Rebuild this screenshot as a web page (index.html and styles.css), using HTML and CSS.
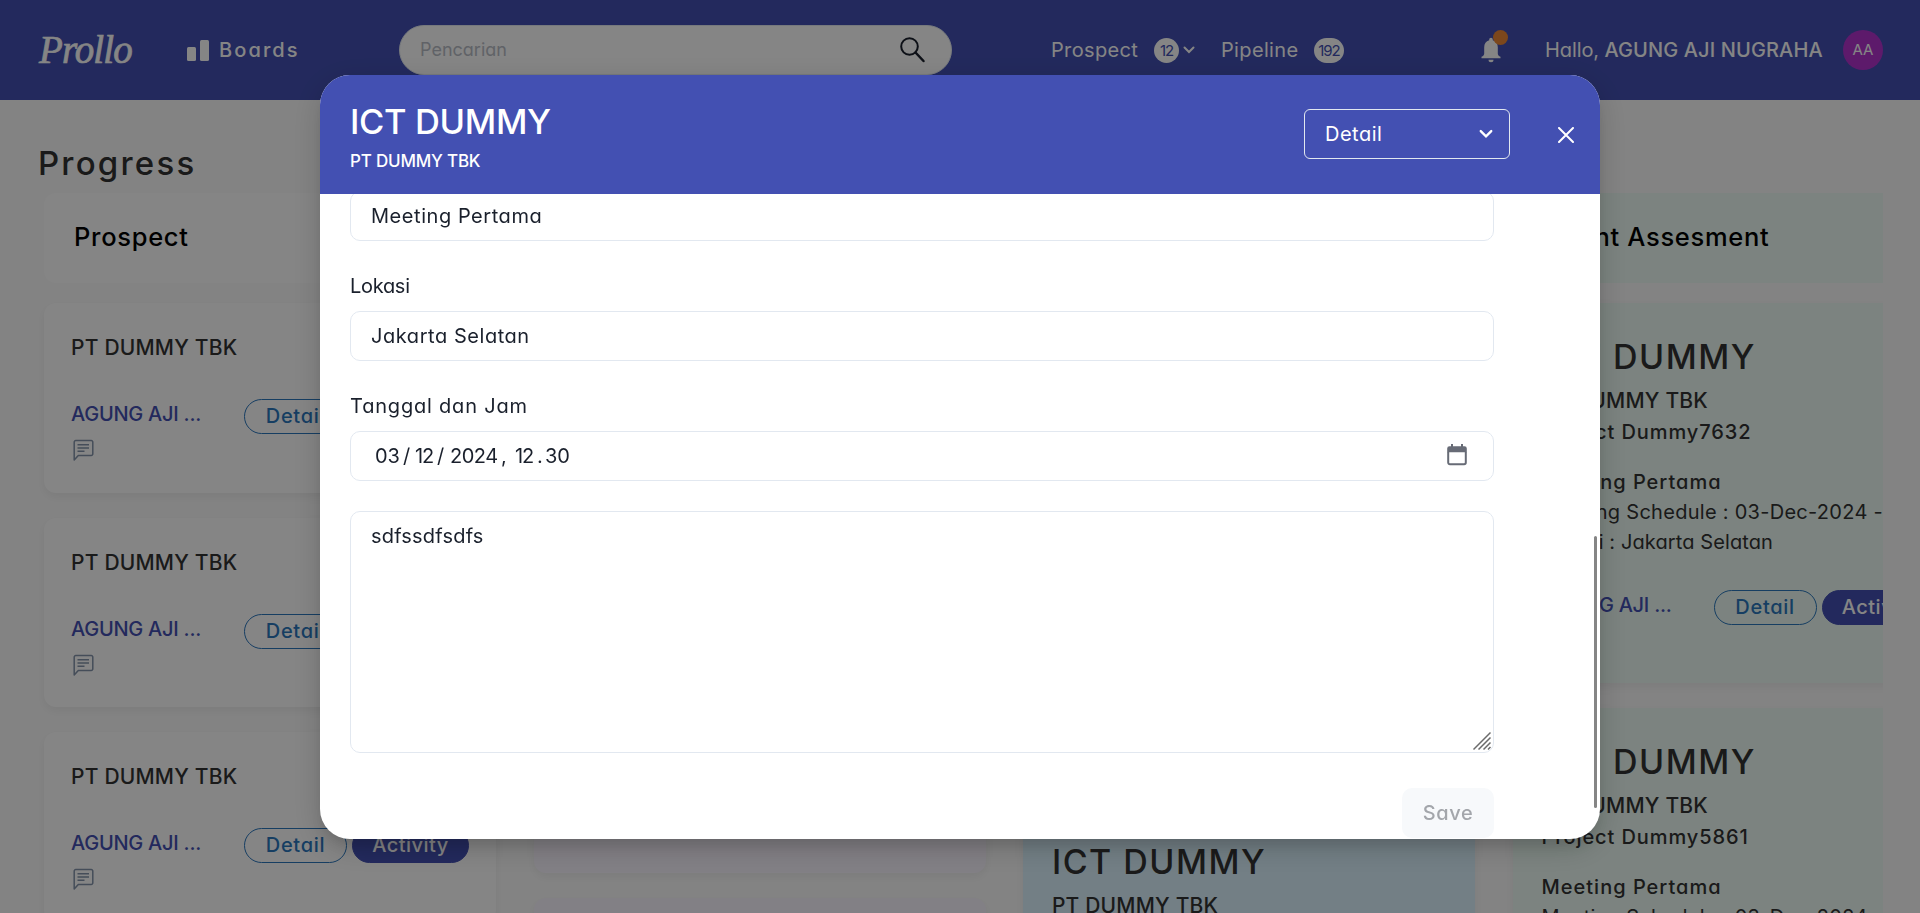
FILE: index.html
```html
<!DOCTYPE html>
<html lang="id">
<head>
<meta charset="utf-8">
<title>Prollo</title>
<link rel="stylesheet" href="styles.css">
</head>
<body>
<svg class="defs" width="0" height="0">
  <symbol id="comment" viewBox="0 0 24 24"><path d="M3.2 21V3.2A1.6 1.6 0 0 1 4.800 1.600H20.200A1.600 1.600 0 0 1 21.800 3.200V14.800A1.600 1.600 0 0 1 20.200 16.400H7.300Z" fill="none" stroke="currentColor" stroke-width="1.5" stroke-linejoin="round"/><path d="M6.500 5.700H18M6.500 9H18M6.500 12.300H13.500" stroke="currentColor" stroke-width="1.400"/></symbol>
  <symbol id="chevron" viewBox="0 0 12 8"><path d="M1.500 1.500 6 6l4.500-4.500" fill="none" stroke="currentColor" stroke-width="2" stroke-linecap="round"/></symbol>
</svg>
<header class="topbar">
  <div class="logo">Prollo</div>
  <div class="boards">
    <svg width="22" height="21" viewBox="0 0 22 21"><rect x="0" y="7" width="9" height="14" rx="1.500" fill="#fff"/><rect x="13" y="0" width="9" height="21" rx="1.500" fill="#fff"/></svg>
    <span>Boards</span>
  </div>
  <div class="search">
    <span>Pencarian</span>
    <svg width="28" height="28" viewBox="0 0 28 28" fill="none" stroke="#1a202c"><circle cx="11.500" cy="10.500" r="8.300" stroke-width="2"/><path d="M17.500 16.500 25.500 25" stroke-width="2.500" stroke-linecap="round"/></svg>
  </div>
  <span class="stat stat-prospect">Prospect</span>
  <span class="count">12</span>
  <svg class="stat-chevron" width="12" height="8"><use href="#chevron"/></svg>
  <span class="stat stat-pipeline">Pipeline</span>
  <span class="count count-wide">192</span>
  <div class="bell">
    <svg width="22" height="26" viewBox="0 0 22 26" fill="#fff"><path d="M11 0.800c1.100 0 1.800.8 1.800 1.900v.5c3.200.9 5 3.500 5 7V16.500c0 1.600 1 2.600 2.700 3.200V21.300H1.500V19.700c1.700-.6 2.700-1.600 2.700-3.200V10.200c0-3.500 1.800-6.100 5-7v-.5c0-1.100.7-1.900 1.800-1.900Z"/><path d="M8.500 22.800h5a2.500 2.500 0 0 1-5 0Z"/></svg>
    <i class="bell-dot"></i>
  </div>
  <div class="greeting">Hallo, <b>AGUNG AJI NUGRAHA</b></div>
  <div class="avatar">AA</div>
</header>

<main class="page">
  <h1 class="page-title">Progress</h1>
  <div class="board">
    <section class="column">
      <div class="column-head">Prospect</div>
      <article class="card small"><div class="company">PT DUMMY TBK</div><div class="actions"><span class="owner">AGUNG AJI ...</span><span class="pill">Detail</span><span class="pill solid">Activity</span></div><svg class="comment" width="24" height="24"><use href="#comment"/></svg></article>
      <article class="card small"><div class="company">PT DUMMY TBK</div><div class="actions"><span class="owner">AGUNG AJI ...</span><span class="pill">Detail</span><span class="pill solid">Activity</span></div><svg class="comment" width="24" height="24"><use href="#comment"/></svg></article>
      <article class="card small"><div class="company">PT DUMMY TBK</div><div class="actions"><span class="owner">AGUNG AJI ...</span><span class="pill">Detail</span><span class="pill solid">Activity</span></div><svg class="comment" width="24" height="24"><use href="#comment"/></svg></article>
    </section>
    <section class="column lavender">
      <div class="column-head"></div>
      <article class="card tall"></article>
      <article class="card"></article>
    </section>
    <section class="column blue">
      <div class="column-head"></div>
      <article class="card medium"></article>
      <article class="card project"><h2>ICT DUMMY</h2><div class="company">PT DUMMY TBK</div></article>
    </section>
    <section class="column mint">
      <div class="column-head">Client Assesment</div>
      <article class="card project"><h2>ICT DUMMY</h2><div class="company">PT DUMMY TBK</div><div class="code">Project Dummy7632</div><div class="stage">Meeting Pertama</div><div class="line">Meeting Schedule : 03-Dec-2024 -</div><div class="line place">Lokasi : Jakarta Selatan</div><div class="actions"><span class="owner">AGUNG AJI ...</span><span class="pill">Detail</span><span class="pill solid">Activity</span></div></article>
      <article class="card project"><h2>ICT DUMMY</h2><div class="company">PT DUMMY TBK</div><div class="code">Project Dummy5861</div><div class="stage">Meeting Pertama</div><div class="line">Meeting Schedule : 03-Dec-2024</div></article>
    </section>
  </div>
</main>

<div class="overlay">
  <div class="modal">
    <div class="modal-head">
      <div class="modal-titles"><div class="modal-title">ICT DUMMY</div><div class="modal-sub">PT DUMMY TBK</div></div>
      <div class="select"><span>Detail</span><svg width="14" height="10" viewBox="0 0 12 8"><use href="#chevron"/></svg></div>
      <svg class="close" width="16" height="16" viewBox="0 0 16 16"><path d="M1 1 15 15M15 1 1 15" stroke="#fff" stroke-width="2" stroke-linecap="round"/></svg>
    </div>
    <div class="modal-body">
      <div class="form">
        <div class="input">Meeting Pertama</div>
        <div class="label tight">Lokasi</div>
        <div class="input">Jakarta Selatan</div>
        <div class="label">Tanggal dan Jam</div>
        <div class="input date">
          <span class="d1">03</span><span class="d2">/</span><span class="d3">12</span><span class="d4">/</span><span class="d5">2024</span><span class="d6">,</span><span class="d3">12</span><span class="d7">.</span><span class="d1">30</span>
          <svg class="calendar" width="20" height="22" viewBox="0 0 20 22"><path d="M1.200 8V18.500A1.700 1.700 0 0 0 2.900 20.200H17.100A1.700 1.700 0 0 0 18.800 18.500V8" fill="none" stroke="#676b76" stroke-width="2"/><path d="M.2 8.300V4.500A2.300 2.300 0 0 1 2.500 2.200H4V0H6V2.200H14V0H16V2.200H17.500A2.300 2.300 0 0 1 19.800 4.500V8.300Z" fill="#676b76"/></svg>
        </div>
        <div class="textarea">sdfssdfsdfs
          <svg class="grip" width="20" height="20" viewBox="0 0 20 20" stroke="#6b6b6b" stroke-width="1.500"><path d="M1.500 18.500 18.500 1.500M6.500 18.500 18.500 6.500M11.500 18.500 18.500 11.500M16 18.500 18.500 16"/></svg>
        </div>
        <div class="save">Save</div>
      </div>
      <i class="scrollbar"></i>
    </div>
  </div>
</div>
</body>
</html>
```
FILE: styles.css
```css
* { box-sizing: border-box; }
body {
  margin: 0;
  height: 913px;
  overflow: hidden;
  background: #fcfcfc;
  color: #333;
  font: 400 20px/30px Inter, "Liberation Sans", sans-serif;
  font-feature-settings: "cv11";
  white-space: nowrap;
}
.defs { display: block; height: 0; }
svg { flex: none; }

/* top bar */
.topbar { display: flex; align-items: center; height: 100px; padding-left: 39px; background: #4350b2; color: #fff; }
.logo { width: 148px; font: italic 400 39px/50px "Liberation Serif", serif; letter-spacing: -0.9px; -webkit-text-stroke: 0.7px #fff; }
.boards { display: flex; align-items: center; gap: 10px; width: 212px; font-weight: 500; letter-spacing: 2.1px; }
.search { display: flex; align-items: center; justify-content: space-between; width: 553px; height: 50px; padding: 0 25px 0 20px; border: 1px solid #e2e8f0; border-radius: 25px; background: #fff; color: #b9bdc6; font-size: 18px; margin-right: 99px; }
.stat { letter-spacing: 0.35px; }
.stat-prospect { width: 103px; }
.stat-pipeline { width: 93px; }
.count { width: 25px; height: 25px; border-radius: 13px; background: #fff; color: #4350b2; font-size: 15px; line-height: 25px; letter-spacing: -1px; text-align: center; }
.count-wide { width: 30px; margin-right: 136px; }
.stat-chevron { margin: 0 26px 0 4px; }
.bell { position: relative; width: 22px; height: 26px; margin-right: 43px; }
.bell svg { display: block; }
.bell-dot { position: absolute; left: 13px; top: -7px; width: 15px; height: 15px; border-radius: 50%; background: #ed8936; }
.greeting { width: 298px; letter-spacing: -0.1px; }
.greeting b { font-weight: 500; letter-spacing: 0.12px; }
.avatar { width: 40px; height: 40px; border-radius: 50%; background: #b233ce; font-size: 15px; line-height: 40px; text-align: center; }

/* board */
.page { height: 813px; margin: 0 37px 0 38px; padding-top: 39px; overflow: hidden; }
.page-title { margin: 0 0 6px; font-size: 33px; line-height: 48px; font-weight: 450; letter-spacing: 2.2px; }
.board { display: grid; grid-template-columns: repeat(4, 452px); gap: 37.7px; padding-left: 6px; }
.column { --tint: #fff; display: flex; flex-direction: column; gap: 25px; }
.lavender { --tint: #faf5ff; }
.blue { --tint: #dcf4ff; }
.mint { --tint: #edfcf5; }
.column-head { height: 90px; margin-bottom: -5px; padding-left: 30px; border-radius: 12px; background: var(--tint); color: #000; font-size: 25.5px; line-height: 88px; font-weight: 500; letter-spacing: 0.7px; }
.mint .column-head { padding-left: 32px; border-radius: 0; }
.card { height: 380px; padding: 30px 0 0 28.5px; border-radius: 12px; background: var(--tint); box-shadow: 0 4px 10px rgba(0, 0, 0, 0.06); overflow: hidden; }
.blue .card, .mint .card { border-radius: 0; }
.card.small { height: 189.500px; padding: 29px 0 0 27px; }
.card.tall { height: 570px; }
.card.medium { height: 480px; }
.project h2 { margin: 0 0 4px; font-size: 34px; line-height: 48px; font-weight: 450; letter-spacing: 1.5px; }
.company { font-size: 21px; line-height: 32px; font-weight: 500; letter-spacing: 0.2px; }
.code { font-weight: 500; letter-spacing: 0.9px; }
.stage { margin-top: 20px; font-weight: 500; letter-spacing: 1px; }
.line { letter-spacing: 0.28px; }
.place { letter-spacing: 0.1px; }
.actions { display: flex; gap: 5px; font-weight: 500; }
.small .actions { margin: 35px 0 5px; }
.project .actions { margin-top: 33px; }
.owner { width: 168px; color: #4350b2; letter-spacing: -0.25px; }
.project .owner { width: 167px; }
.pill { width: 103px; height: 35px; border: 1px solid #2b77bd; border-radius: 18px; color: #2b77bd; line-height: 33px; text-align: center; letter-spacing: 0.7px; }
.solid { width: 117px; border-color: #4350b2; background: #4350b2; color: #fff; letter-spacing: 0.5px; }
.comment { display: block; color: #8494ab; }

/* modal */
.overlay { position: fixed; inset: 0; display: flex; justify-content: center; align-items: flex-start; padding-top: 75px; background: rgba(0, 0, 0, 0.48); }
.modal { width: 1280px; height: 764px; border-radius: 30px; background: #fff; color: #1a202c; overflow: hidden; box-shadow: 0 10px 15px -3px rgba(0, 0, 0, 0.1), 0 8px 30px rgba(0, 0, 0, 0.18); }
.modal-head { display: flex; height: 119px; padding: 0 26px 0 30px; background: #4350b2; color: #fff; }
.modal-titles { flex: 1; padding-top: 23px; font-weight: 500; }
.modal-title { font-size: 34.5px; line-height: 48px; letter-spacing: -0.35px; }
.modal-sub { font-size: 17px; line-height: 30px; letter-spacing: -0.2px; }
.select { display: flex; align-items: center; justify-content: space-between; width: 206px; height: 50px; margin: 34px 48px 0 0; padding: 0 16px 0 20px; border: 1px solid #e2e8f0; border-radius: 6px; letter-spacing: 0.5px; }
.close { margin-top: 52px; }
.modal-body { display: flex; justify-content: space-between; height: 645px; overflow: hidden; padding: 0 3px 0 30px; }
.form { width: 1144px; margin-top: -3px; }
.input { display: flex; align-items: center; height: 50px; padding: 0 20px; border: 1px solid #e2e8f0; border-radius: 10px; letter-spacing: 0.55px; }
.label { margin: 30px 0 10px; letter-spacing: 0.8px; }
.label.tight { letter-spacing: -0.3px; }
.date { padding: 0 26px 0 24px; letter-spacing: -0.2px; }
.calendar { margin: -2px 0 0 auto; }
.d1 { width: 28px; }
.d2 { width: 12px; }
.d3 { width: 22px; letter-spacing: -1.2px; }
.d4 { width: 13px; }
.d5 { width: 51px; letter-spacing: -0.5px; }
.d6 { width: 14px; }
.d7 { width: 8px; }
.textarea { position: relative; height: 242px; margin-top: 30px; padding: 9px 20px; border: 1px solid #e2e8f0; border-radius: 10px; letter-spacing: 0.2px; }
.grip { position: absolute; right: 1px; bottom: 1px; }
.save { width: 92px; height: 50px; margin: 35px 0 0 auto; border-radius: 10px; background: #f7f9fb; color: #a3a6ab; font-weight: 500; line-height: 50px; text-align: center; letter-spacing: 0.6px; }
.scrollbar { width: 3px; height: 272px; margin-top: 342px; border-radius: 2px; background: #858585; }
```
